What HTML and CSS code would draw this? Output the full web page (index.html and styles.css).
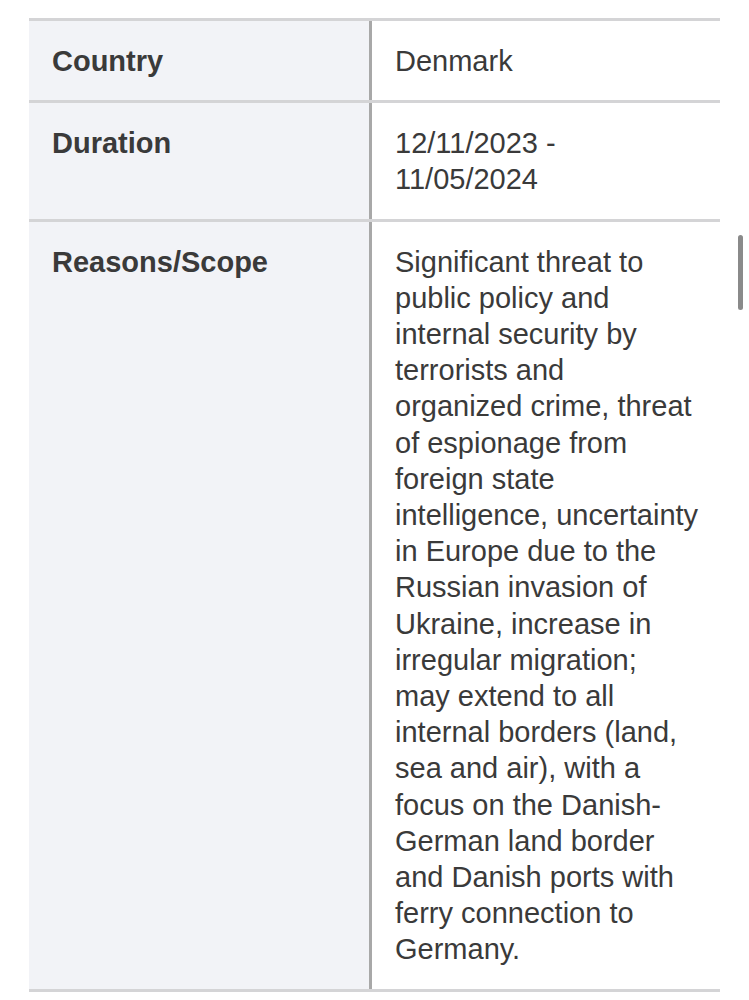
FILE: index.html
```html
<!DOCTYPE html>
<html lang="en">
<head>
<meta charset="utf-8">
<title>Border control</title>
<link rel="stylesheet" href="styles.css">
</head>
<body>
<div class="info-table">
  <div class="row">
    <div class="label">Country</div>
    <div class="value">Denmark</div>
  </div>
  <div class="row">
    <div class="label">Duration</div>
    <div class="value">12/11/2023 -<br>11/05/2024</div>
  </div>
  <div class="row">
    <div class="label">Reasons/Scope</div>
    <div class="value lines">Significant threat to<br>public policy and<br>internal security by<br>terrorists and<br>organized crime, threat<br>of espionage from<br>foreign state<br>intelligence, uncertainty<br>in Europe due to the<br>Russian invasion of<br>Ukraine, increase in<br>irregular migration;<br>may extend to all<br>internal borders (land,<br>sea and air), with a<br>focus on the Danish-<br>German land border<br>and Danish ports with<br>ferry connection to<br>Germany.</div>
  </div>
</div>
<div class="scrollbar"></div>
</body>
</html>
```

FILE: styles.css
```css
html, body {
  margin: 0;
  padding: 0;
  background: #ffffff;
}
body {
  font-family: "Liberation Sans", Arial, sans-serif;
  color: #3a3a3a;
  font-size: 29px;
  line-height: 36.2px;
}
.info-table {
  margin: 18px 0 0 29px;
  width: 691px;
  border-top: 3px solid #d4d4d6;
}
.row {
  display: grid;
  grid-template-columns: 343px 348px;
  border-bottom: 3px solid #d4d4d6;
}
.label {
  background: #f2f3f7;
  font-weight: bold;
  padding: 22px 23px 21px;
  border-right: 3px solid #a8a8a8;
}
.value {
  padding: 22px 23px 21px;
}
.lines {
  white-space: nowrap;
}
.scrollbar {
  position: absolute;
  left: 738px;
  top: 235px;
  width: 5px;
  height: 75px;
  border-radius: 3px;
  background: #8a8a8a;
}
```
